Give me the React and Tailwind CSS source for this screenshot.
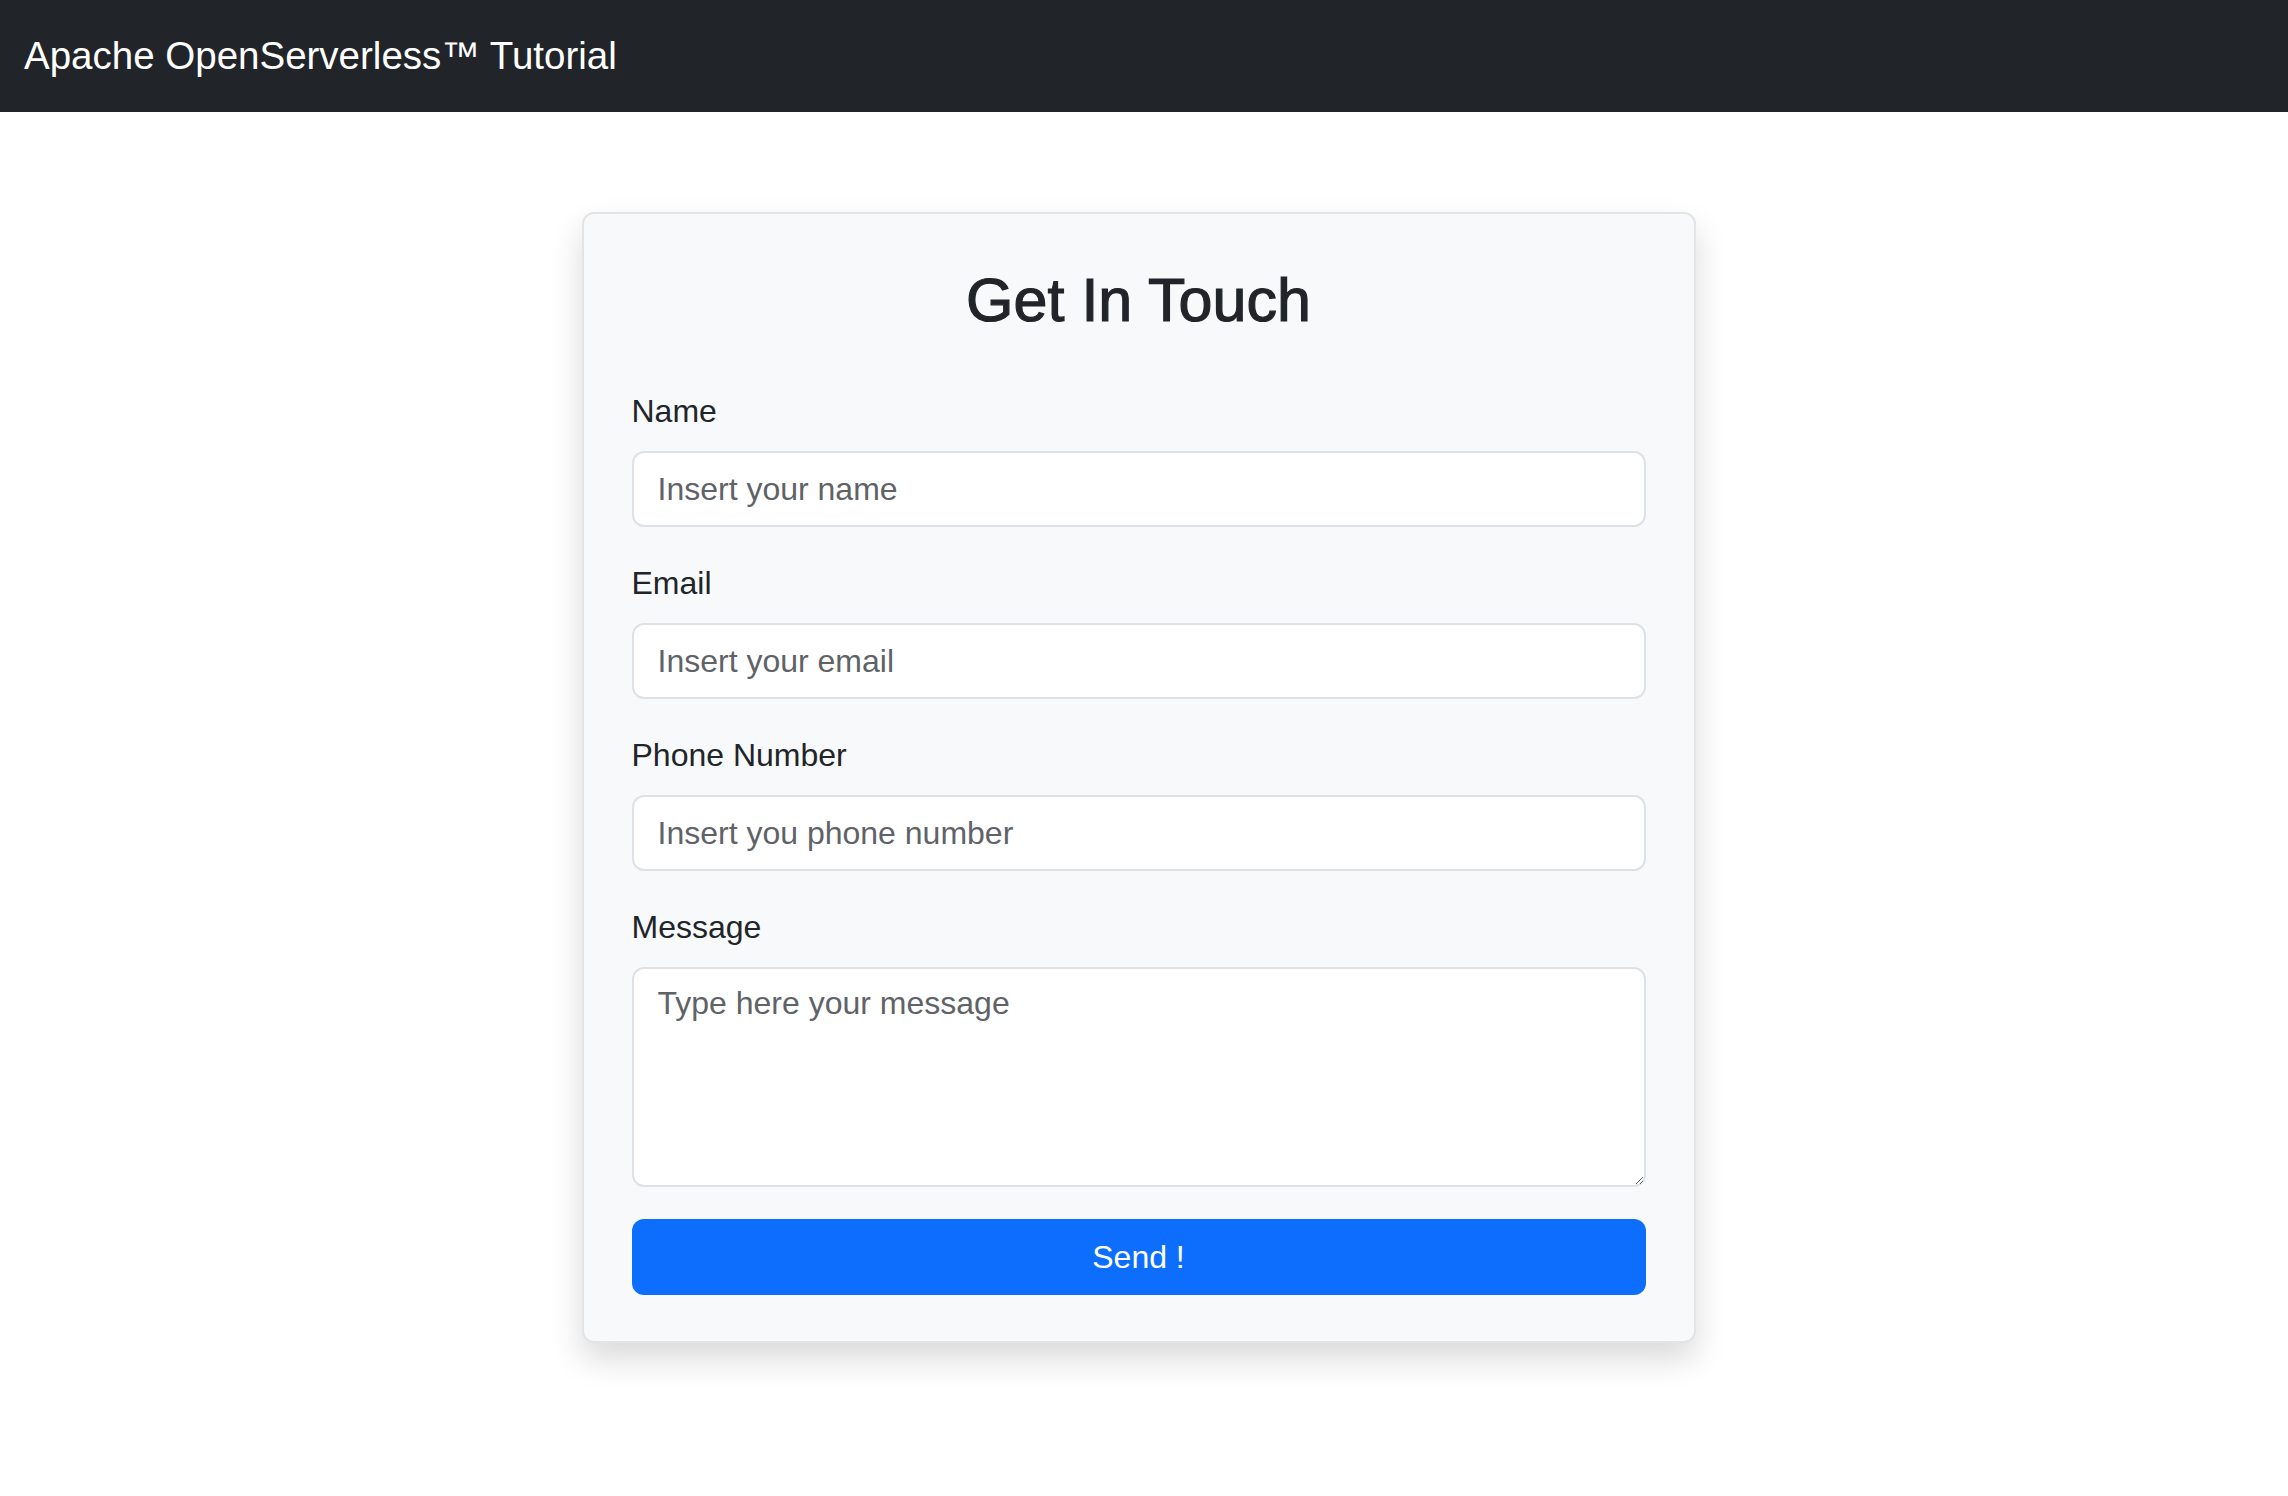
export default function App() {
  const font = { fontFamily: '"Liberation Sans", Arial, sans-serif' };
  const inputCls =
    "block w-full h-[76px] rounded-[12px] border-2 border-[#dee2e6] bg-white px-[24px] text-[32px] text-[#212529] placeholder:text-[#5f6368] outline-none";
  return (
    <div className="min-h-[1496px] bg-white" style={font}>
      <nav className="h-[112px] bg-[#212529] flex items-center px-[24px]">
        <span className="text-white text-[38.5px] leading-none">Apache OpenServerless™ Tutorial</span>
      </nav>
      <div className="flex justify-center pt-[100px] pr-[11px]">
        <div className="w-[1114px] rounded-[12px] border-2 border-[#e3e4e6] bg-[#f8f9fa] px-[48px] pt-[48px] pb-[46px] shadow-[0_16px_32px_rgba(0,0,0,0.15)]">
          <h2 className="text-center text-[61px] leading-[77px] font-normal text-[#212529] mb-[48px] [-webkit-text-stroke:1.2px_#212529]">Get In Touch</h2>
          <form onSubmit={(e) => e.preventDefault()}>
            <div className="mb-[32px]">
              <label className="block text-[32px] leading-[48px] mb-[16px] text-[#212529]">Name</label>
              <input className={inputCls} placeholder="Insert your name" />
            </div>
            <div className="mb-[32px]">
              <label className="block text-[32px] leading-[48px] mb-[16px] text-[#212529]">Email</label>
              <input className={inputCls} placeholder="Insert your email" />
            </div>
            <div className="mb-[32px]">
              <label className="block text-[32px] leading-[48px] mb-[16px] text-[#212529]">Phone Number</label>
              <input className={inputCls} placeholder="Insert you phone number" />
            </div>
            <div className="mb-[32px]">
              <label className="block text-[32px] leading-[48px] mb-[16px] text-[#212529]">Message</label>
              <textarea
                className="block w-full h-[220px] rounded-[12px] border-2 border-[#dee2e6] bg-white px-[24px] py-[10px] text-[32px] leading-[48px] text-[#212529] placeholder:text-[#5f6368] outline-none resize-y"
                placeholder="Type here your message"
              />
            </div>
            <button className="block w-full h-[76px] rounded-[12px] bg-[#0d6efd] text-white text-[32px]">Send !</button>
          </form>
        </div>
      </div>
    </div>
  );
}
